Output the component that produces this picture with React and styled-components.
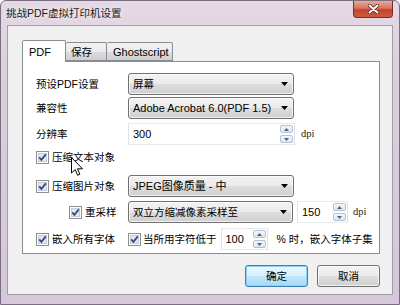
import React from 'react'
import styled, { createGlobalStyle } from 'styled-components'

const GlobalStyle = createGlobalStyle`
  html, body { margin: 0; padding: 0; background: #fff; }
  body {
    font-family: "Liberation Sans", "Noto Sans CJK SC", sans-serif;
    font-size: 10.5px;
    color: #000;
  }
`

const Window = styled.div`
  width: 400px;
  height: 305px;
  box-sizing: border-box;
  display: flex;
  flex-direction: column;
  background: linear-gradient(180deg, #e4d9e5 0%, #dacddc 30%, #d6c8d9 100%);
  border: 1px solid #7a6d80;
  border-radius: 6px 6px 0 0;
`

const TitleBar = styled.div`
  height: 24px;
  display: flex;
  justify-content: space-between;
  align-items: flex-start;
`

const Title = styled.div`
  padding: 5px 0 0 5px;
  line-height: 14px;
  font-size: 10.5px;
  color: #1a1a1a;
  text-shadow: 0 0 6px rgba(255, 255, 255, 0.9);
`

const CloseButton = styled.div`
  width: 40px;
  height: 17px;
  margin-right: 6px;
  box-sizing: border-box;
  border: 1px solid #7b2c22;
  border-top: none;
  border-radius: 0 0 4px 4px;
  background: linear-gradient(180deg, #e9a899 0%, #d7735f 45%, #c4432f 55%, #cf5b3f 100%);
  display: flex;
  align-items: center;
  justify-content: center;
`

const Client = styled.div`
  flex: 1;
  margin: 0 6px 9px 6px;
  border: 1px solid #a69cab;
  background: #f0f0f0;
  padding: 14px 12px 0 14px;
  display: flex;
  flex-direction: column;
`

const TabRow = styled.div`
  display: flex;
  align-items: flex-end;
  height: 21px;
  position: relative;
  z-index: 1;
`

const Tab = styled.div`
  box-sizing: border-box;
  width: ${p => p.$w}px;
  height: ${p => (p.$active ? 22 : 19)}px;
  margin-bottom: ${p => (p.$active ? -1 : 0)}px;
  padding-left: ${p => p.$pad}px;
  border: 1px solid #898c95;
  border-bottom: ${p => (p.$active ? 'none' : '1px solid #898c95')};
  border-left: ${p => (p.$first || p.$active ? '1px solid #898c95' : 'none')};
  border-radius: 2px 2px 0 0;
  background: ${p => (p.$active ? '#fff' : 'linear-gradient(180deg, #f2f2f2 0%, #ebebeb 50%, #dddddd 51%, #cfcfcf 100%)')};
  display: flex;
  align-items: center;
  font-size: ${p => (p.$latin ? 11 : 10.5)}px;
  line-height: 14px;
`

const Panel = styled.div`
  position: relative;
  box-sizing: border-box;
  height: 193px;
  border: 1px solid #898c95;
  background: #fff;
  padding: 11px 0 0 13px;
`

const Row = styled.div`
  display: flex;
  align-items: center;
  height: ${p => p.$h || 22}px;
  margin-top: ${p => p.$top}px;
`

const Label = styled.div`
  width: 92px;
  flex: none;
  line-height: 14px;
`

const Cell = styled.div`
  width: ${p => 92 - (p.$indent || 0)}px;
  padding-left: ${p => p.$indent || 0}px;
  flex: none;
  display: flex;
  align-items: center;
  gap: 3px;
  line-height: 14px;
`

const Inline = styled.div`
  flex: none;
  display: flex;
  align-items: center;
  gap: 2px;
  line-height: 14px;
`

const SelectBox = styled.div`
  flex: none;
  box-sizing: border-box;
  width: ${p => p.$w || 166}px;
  height: 22px;
  border: 1px solid #707070;
  border-radius: 3px;
  background: linear-gradient(180deg, #f2f2f2 0%, #ebebeb 50%, #dddddd 51%, #cfcfcf 100%);
  box-shadow: inset 0 0 0 1px rgba(255, 255, 255, 0.7);
  display: flex;
  align-items: center;
  justify-content: space-between;
  padding: 0 5px 0 4px;
  font-size: ${p => (p.$latin ? 11 : 10.5)}px;
  line-height: 14px;
`

const SpinBox = styled.div`
  flex: none;
  box-sizing: border-box;
  width: ${p => p.$w}px;
  height: 22px;
  margin-left: ${p => p.$left || 0}px;
  border: 1px solid #abadb3;
  border-top-color: #e3e9ef;
  border-left-color: #e2e3ea;
  border-right-color: #dbdfe6;
  border-bottom-color: #e3e9ef;
  background: #fff;
  display: flex;
  align-items: center;
  justify-content: space-between;
  padding: 0 1px 0 4px;
  font-size: 11px;
  line-height: 14px;
`

const SpinButtons = styled.div`
  display: flex;
  flex-direction: column;
  gap: 2px;
`

const SpinButton = styled.div`
  box-sizing: border-box;
  width: 13px;
  height: 8px;
  border: 1px solid #b5c2d3;
  border-radius: 2px;
  background: linear-gradient(180deg, #f4f7fb 0%, #dde5ef 100%);
  display: flex;
  align-items: center;
  justify-content: center;
`

const Unit = styled.div`
  flex: none;
  margin-left: ${p => p.$left}px;
  font-family: "Liberation Serif", "Noto Sans CJK SC", serif;
  font-size: 10.5px;
  line-height: 14px;
  color: #222;
`

const UnitCJK = styled.div`
  flex: none;
  margin-left: ${p => p.$left}px;
  line-height: 14px;
  white-space: nowrap;
`

const CheckSvg = styled.svg`
  flex: none;
  display: block;
`

const Cursor = styled.svg`
  position: absolute;
  left: 48px;
  top: 95px;
`

const ButtonRow = styled.div`
  display: flex;
  justify-content: flex-end;
  gap: 9px;
  margin-top: 11px;
`

const Button = styled.div`
  box-sizing: border-box;
  width: 63px;
  height: 22px;
  border: 1px solid ${p => (p.$default ? '#3c7fb1' : '#707070')};
  border-radius: 3px;
  background: ${p => (p.$default
    ? 'linear-gradient(180deg, #eaf6fd 0%, #d9f0fc 50%, #bee6fd 51%, #a7d9f5 100%)'
    : 'linear-gradient(180deg, #f2f2f2 0%, #ebebeb 50%, #dddddd 51%, #cfcfcf 100%)')};
  box-shadow: inset 0 0 0 1px ${p => (p.$default ? '#8ed3f6' : 'rgba(255,255,255,0.7)')};
  display: flex;
  align-items: center;
  justify-content: center;
  line-height: 14px;
`

function Check() {
  return (
    <CheckSvg width="13" height="13" viewBox="0 0 13 13">
      <rect x="0.5" y="0.5" width="12" height="12" fill="#fdfdfd" stroke="#8e8f8f" />
      <rect x="2.5" y="2.5" width="8" height="8" fill="#e4e6ea" stroke="#c8ccd4" />
      <path d="M3.2 6.4 L5.4 8.8 L9.8 3.4" fill="none" stroke="#2c4b8f" strokeWidth="1.8" />
    </CheckSvg>
  )
}

function Arrow() {
  return (
    <svg width="7" height="4" viewBox="0 0 7 4">
      <path d="M0 0 H7 L3.5 4 Z" fill="#000" />
    </svg>
  )
}

function Select({ children, latin, w }) {
  return (
    <SelectBox $latin={latin} $w={w}>
      <span>{children}</span>
      <Arrow />
    </SelectBox>
  )
}

function Spin({ children, w, left }) {
  return (
    <SpinBox $w={w} $left={left}>
      <span>{children}</span>
      <SpinButtons>
        <SpinButton>
          <svg width="5" height="3" viewBox="0 0 5 3"><path d="M0 3 H5 L2.5 0 Z" fill="#4d6185" /></svg>
        </SpinButton>
        <SpinButton>
          <svg width="5" height="3" viewBox="0 0 5 3"><path d="M0 0 H5 L2.5 3 Z" fill="#4d6185" /></svg>
        </SpinButton>
      </SpinButtons>
    </SpinBox>
  )
}

export default function App() {
  return (
    <>
      <GlobalStyle />
      <Window>
        <TitleBar>
          <Title>挑战PDF虚拟打印机设置</Title>
          <CloseButton>
            <svg width="11" height="10" viewBox="0 0 11 10">
              <path d="M1.5 1.5 L9.5 8.5 M9.5 1.5 L1.5 8.5" stroke="#5a1d16" strokeWidth="3.4" strokeLinecap="round" />
              <path d="M1.5 1.5 L9.5 8.5 M9.5 1.5 L1.5 8.5" stroke="#fff" strokeWidth="2" strokeLinecap="round" />
            </svg>
          </CloseButton>
        </TitleBar>
        <Client>
          <TabRow>
            <Tab $w={44} $pad={6} $active $first $latin>PDF</Tab>
            <Tab $w={41} $pad={5}>保存</Tab>
            <Tab $w={66} $pad={6} $latin>Ghostscript</Tab>
          </TabRow>
          <Panel>
            <Row $top={0}>
              <Label>预设PDF设置</Label>
              <Select>屏幕</Select>
            </Row>
            <Row $top={2}>
              <Label>兼容性</Label>
              <Select latin>Adobe Acrobat 6.0(PDF 1.5)</Select>
            </Row>
            <Row $top={4}>
              <Label>分辨率</Label>
              <Spin w={167}>300</Spin>
              <Unit $left={6}>dpi</Unit>
            </Row>
            <Row $top={2} $h={20}>
              <Cell><Check />压缩文本对象</Cell>
            </Row>
            <Row $top={8}>
              <Cell><Check />压缩图片对象</Cell>
              <Select latin>JPEG图像质量 - 中</Select>
            </Row>
            <Row $top={4}>
              <Cell $indent={33}><Check />重采样</Cell>
              <Select w={165}>双立方缩减像素采样至</Select>
              <Spin w={51} left={4}>150</Spin>
              <Unit $left={5}>dpi</Unit>
            </Row>
            <Row $top={5}>
              <Cell><Check />嵌入所有字体</Cell>
              <Inline><Check />当所用字符低于</Inline>
              <Spin w={47} left={4}>100</Spin>
              <UnitCJK $left={9}>% 时，嵌入字体子集</UnitCJK>
            </Row>
            <Cursor width="13" height="20" viewBox="0 0 13 20">
              <path d="M0.5 0.5 V16 L4.2 12.6 L6.6 18.3 L8.8 17.3 L6.5 11.8 H11.5 Z" fill="#fff" stroke="#000" strokeWidth="1" strokeLinejoin="round" />
            </Cursor>
          </Panel>
          <ButtonRow>
            <Button $default>确定</Button>
            <Button>取消</Button>
          </ButtonRow>
        </Client>
      </Window>
    </>
  )
}
